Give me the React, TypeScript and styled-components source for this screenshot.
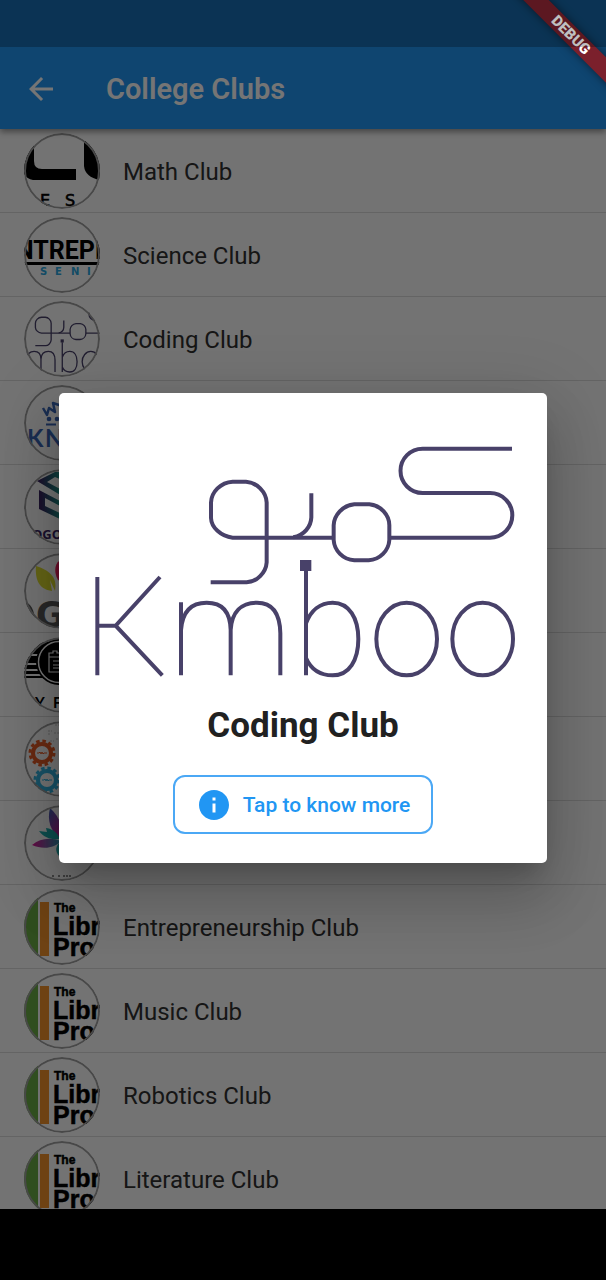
import React from 'react';
import styled, { createGlobalStyle } from 'styled-components';

const GlobalStyle = createGlobalStyle`
  *, *::before, *::after { box-sizing: border-box; }
  body {
    margin: 0;
    background: #000;
    font-family: Roboto, 'Liberation Sans', sans-serif;
  }
  button { font: inherit; border: 0; background: none; padding: 0; cursor: pointer; }
  h1, h2, ul { margin: 0; padding: 0; }
`;

const STATUS_HEIGHT = '47px';
const NAV_HEIGHT = '71px';

const Screen = styled.div`
  position: relative;
  display: flex;
  flex-direction: column;
  height: 100vh;
  overflow: hidden;
  background: #fafafa;
`;

const AppBar = styled.header`
  position: relative;
  z-index: 1;
  flex: none;
  display: flex;
  align-items: center;
  gap: 47px;
  padding: 49px 23px 0;
  height: 129px;
  background: #2196f3;
  color: #fff;
  box-shadow: 0 3px 6px rgba(0, 0, 0, 0.4);
`;

const BackButton = styled.button`
  display: flex;
  color: inherit;
`;

const AppTitle = styled.h1`
  font-size: 29px;
  line-height: 36px;
  font-weight: 600;
`;

const ClubList = styled.ul`
  flex: 1 1 0;
  min-height: 0;
  overflow: hidden;
  list-style: none;
`;

const ClubItem = styled.li`
  height: 84px;
  border-bottom: 1px solid #dadada;
`;

const ClubButton = styled.button`
  display: flex;
  align-items: center;
  gap: 23px;
  width: 100%;
  padding: 4px 24px;
  text-align: left;
  color: #303030;
`;

const AvatarRing = styled.span`
  flex: none;
  width: 76px;
  height: 76px;
  border-radius: 50%;
  overflow: hidden;
  background: #fafafa;
  position: relative;

  &::after {
    content: '';
    position: absolute;
    inset: 0;
    border: 2px solid #9e9e9e;
    border-radius: 50%;
  }

  svg { display: block; width: 100%; height: 100%; }
`;

const ClubName = styled.span`
  padding-top: 2px;
  font-size: 24px;
  line-height: 28px;
`;

const NavigationBar = styled.footer`
  flex: none;
  height: ${NAV_HEIGHT};
  background: #000;
`;

const Scrim = styled.div`
  position: absolute;
  inset: 0;
  z-index: 2;
  display: flex;
  align-items: center;
  justify-content: center;
  padding: ${STATUS_HEIGHT} 59px ${NAV_HEIGHT};
  background: rgba(0, 0, 0, 0.54);
`;

const Dialog = styled.section`
  flex: 1;
  display: flex;
  flex-direction: column;
  align-items: center;
  padding-bottom: 29px;
  border-radius: 5px;
  background: #fff;
  box-shadow:
    0 16px 22px -10px rgba(0, 0, 0, 0.2),
    0 36px 56px 4px rgba(0, 0, 0, 0.14),
    0 14px 68px 12px rgba(0, 0, 0, 0.12);
`;

const DialogLogo = styled.div`
  width: 100%;

  svg { display: block; width: 100%; }
`;

const DialogTitle = styled.h2`
  margin-bottom: 26px;
  font-size: 35px;
  line-height: 46px;
  font-weight: 700;
  color: #212121;
`;

const MoreButton = styled.button`
  display: flex;
  align-items: center;
  gap: 11px;
  height: 59px;
  padding: 0 21px;
  border: 2px solid #4ba8f5;
  border-radius: 12px;
  color: #2196f3;
  font-size: 21px;
  line-height: 24px;
  font-weight: 500;
`;

const RibbonCorner = styled.div`
  position: absolute;
  top: 0;
  right: 0;
  z-index: 3;
  width: 120px;
  height: 120px;
  overflow: hidden;
  pointer-events: none;
`;

const Ribbon = styled.div`
  position: absolute;
  top: 26px;
  right: -65px;
  width: 200px;
  text-align: center;
  font-size: 15px;
  line-height: 18px;
  font-weight: 900;
  color: #fff;
  background: #7b202c;
  box-shadow: 0 0 9px rgba(0, 0, 0, 0.5);
  transform: rotate(45deg);
`;

const StatusShade = styled.div`
  position: absolute;
  inset: 0 0 auto;
  z-index: 4;
  height: ${STATUS_HEIGHT};
  background: rgba(0, 0, 0, 0.25);
  pointer-events: none;
`;

function KmbooMark({ viewBox, weight = 12 }: { viewBox: string; weight?: number }) {
  return (
    <svg viewBox={viewBox} fill="none" stroke="#484169" strokeWidth={weight} aria-hidden="true">
      <path d="M1358 56H1090A66.5 66.5 0 0 0 1090 189H1292A67 67 0 0 1 1292 323H990" />
      <path d="M823 323H520C484 319 456 292 455 264V218C456 186 484 157 520 155H560C592 157 621 186 622 218V397C620 428 592 456 562 457H454" />
      <path d="M756 190V262C755 290 734 316 702 322" />
      <path d="M885 223H930C965 226 990 256 990 286V330C988 362 962 389 928 391H885C851 389 825 362 823 330V286C824 256 850 226 885 223Z" />
      <rect x="722" y="390" width="34" height="33" fill="#484169" stroke="none" />
      <path d="M740 420V736M740 580C754 542 782 518 820 518C870 518 897 565 897 627C897 690 870 736 820 736C782 736 754 716 740 684" />
      <path d="M114 441V736M114 587H168M302 441L169 587L309 736" />
      <path d="M365 517V736M365 600C369 545 396 518 442 518C488 518 513 545 514 600V736M514 600C517 545 547 518 593 518C640 518 662 550 663 610V736" />
      <ellipse cx="1042" cy="627" rx="91" ry="109" />
      <ellipse cx="1270" cy="627" rx="91" ry="109" />
    </svg>
  );
}

function MathMark() {
  return (
    <svg viewBox="0 0 76 76" aria-hidden="true">
      <path d="M0 8H10V28Q10 36 18 36H52V47H9Q3 46 0 41Z" />
      <path d="M60 8H76V47Q61 44 60 33Z" />
      <g fontFamily="DejaVu Sans" fontSize="16" stroke="#000" strokeWidth="0.6">
        <text x="16" y="73">E</text>
        <text x="41" y="73">S</text>
      </g>
    </svg>
  );
}

function ScienceMark() {
  return (
    <svg viewBox="0 0 76 76" aria-hidden="true">
      <text x="-8" y="42" fontFamily="Roboto" fontWeight="700" fontSize="25">
        NTREPR
      </text>
      <rect y="45" width="76" height="3" />
      <g fontFamily="DejaVu Sans" fontWeight="700" fontSize="10" fill="#28a3dc">
        <text x="16" y="58">S</text>
        <text x="31" y="58">E</text>
        <text x="47" y="58">N</text>
        <text x="63" y="58">I</text>
      </g>
    </svg>
  );
}

function KnMark() {
  return (
    <svg viewBox="0 0 76 76" aria-hidden="true">
      <g fill="none" stroke="#3a64b4" strokeWidth="2.5" strokeLinejoin="round">
        <path d="M19 23L23 30L25 23L31 27L29 18L38 21" />
        <path d="M22 39.5H32" strokeWidth="2" />
      </g>
      <g fill="#3a64b4">
        <circle cx="25" cy="34" r="2.3" />
        <circle cx="33" cy="34" r="2.3" />
        <g fontFamily="Lato" fontWeight="700" fontSize="24">
          <text x="3" y="62">K</text>
          <text x="21" y="62">N</text>
        </g>
      </g>
    </svg>
  );
}

function LogoMark() {
  return (
    <svg viewBox="0 0 76 76" aria-hidden="true">
      <defs>
        <linearGradient id="fold" x1="0" x2="1">
          <stop offset="0.1" stopColor="#3a2462" />
          <stop offset="1" stopColor="#1fa08c" />
        </linearGradient>
      </defs>
      <path d="M13 12L31 3H38V11L31 8L23 13L38 21V27Z" fill="url(#fold)" />
      <path d="M15 21L38 33V38L21 29V37L38 45V51L15 40Z" fill="url(#fold)" />
      <text x="8" y="70" fontFamily="Open Sans" fontWeight="700" fontSize="13" fill="#3a2462">OGO</text>
    </svg>
  );
}

function LeafLetterMark() {
  return (
    <svg viewBox="0 0 76 76" aria-hidden="true">
      <path d="M12 13C24 17 34 23 31 38L26 27L28 38C15 36 11 27 12 13Z" fill="#dcdc30" />
      <path d="M38 6C31 9 29 18 34 27L38 29Z" fill="#f0205c" />
      <path d="M0 48C7 51 10 56 11 67C4 62 1 57 0 48Z" fill="#585858" />
      <text x="12" y="74" fontFamily="DejaVu Sans" fontWeight="700" fontSize="35" fill="#585858">G</text>
    </svg>
  );
}

function CameraMark() {
  return (
    <svg viewBox="0 0 76 76" aria-hidden="true">
      <path d="M0 5H38V17H0ZM0 19H38V26H0ZM0 28H38V32H0ZM0 34H38V37H0ZM0 39H38V41H0Z" />
      <circle cx="35" cy="25" r="23" />
      <circle cx="35" cy="25" r="20.5" fill="none" stroke="#fff" strokeWidth="1.5" />
      <path d="M25 16H29V14H33V16H46V35H25ZM25 20H46M29 24H46M29 28H46M29 31H46" fill="none" stroke="#fff" strokeWidth="1.2" />
      <g fontFamily="Lato" fontSize="15" fontWeight="700">
        <text x="11" y="71">Y</text>
        <text x="29" y="71">F</text>
      </g>
    </svg>
  );
}

function Gear({ cx, cy, color }: { cx: number; cy: number; color: string }) {
  return (
    <g transform={`translate(${cx} ${cy})`}>
      <circle r="9" fill="none" stroke={color} strokeWidth="4" />
      <circle r="12" fill="none" stroke={color} strokeWidth="3" strokeDasharray="3.5 2.783" />
      <path d="M-5 0H-3L-2 -1L-1 1L0 -1L1 1L2 0H5" fill="none" stroke={color} strokeWidth="1" />
    </g>
  );
}

function GearsMark() {
  return (
    <svg viewBox="0 0 76 76" aria-hidden="true">
      <path d="M24 10H28M30 12H37M24 13H27M31 4H37M26 20H30M32 18H37" stroke="#c4c4c4" strokeWidth="1" strokeDasharray="2 1" />
      <Gear cx={18} cy={32} color="#e85c26" />
      <Gear cx={23} cy={59} color="#35b4e0" />
    </svg>
  );
}

function PetalsMark() {
  return (
    <svg viewBox="0 0 76 76" aria-hidden="true">
      <defs>
        <linearGradient id="petalUp" x1="0" y1="0" x2="0.6" y2="1">
          <stop offset="0" stopColor="#3c64b4" />
          <stop offset="1" stopColor="#c81e96" />
        </linearGradient>
        <linearGradient id="petalSide" x1="0" x2="1">
          <stop offset="0" stopColor="#dc1496" />
          <stop offset="1" stopColor="#28a0b4" />
        </linearGradient>
      </defs>
      <path d="M26 3C36 12 40 24 37 35C26 26 23 15 26 3Z" fill="url(#petalUp)" />
      <path d="M15 26L23 27L22 23C30 24 34 29 36 34C28 35 20 33 15 26Z" fill="#1eaaaa" />
      <path d="M8 40C16 33 27 32 37 36C31 43 19 45 8 40Z" fill="url(#petalSide)" />
      <path d="M37 36C31 41 31 46 35 51L38 50Z" fill="#1eaaaa" />
      <path d="M28 71H31M34 71H36M39 71H48" stroke="#222" strokeWidth="1" strokeDasharray="2 1" />
    </svg>
  );
}

function LibraryMark() {
  return (
    <svg viewBox="0 0 76 76" aria-hidden="true">
      <rect width="14" height="76" fill="#6aaa44" />
      <rect x="16" y="13" width="9" height="54" fill="#f0912a" />
      <g fontFamily="Liberation Sans" fontWeight="700" stroke="#000" strokeWidth="0.5">
        <text x="30" y="23" fontSize="12">The</text>
        <text x="29" y="46" fontSize="25">Libr</text>
        <text x="29" y="67" fontSize="25">Pro</text>
      </g>
    </svg>
  );
}

interface Club {
  id: string;
  name?: string;
  mark: React.ReactNode;
}

const clubs: Club[] = [
  { id: 'math', name: 'Math Club', mark: <MathMark /> },
  { id: 'science', name: 'Science Club', mark: <ScienceMark /> },
  { id: 'coding', name: 'Coding Club', mark: <KmbooMark viewBox="334 -17 806 806" weight={14} /> },
  { id: 'kn', mark: <KnMark /> },
  { id: 'fold', mark: <LogoMark /> },
  { id: 'leaf', mark: <LeafLetterMark /> },
  { id: 'camera', mark: <CameraMark /> },
  { id: 'gears', mark: <GearsMark /> },
  { id: 'petals', mark: <PetalsMark /> },
  { id: 'entrepreneurship', name: 'Entrepreneurship Club', mark: <LibraryMark /> },
  { id: 'music', name: 'Music Club', mark: <LibraryMark /> },
  { id: 'robotics', name: 'Robotics Club', mark: <LibraryMark /> },
  { id: 'literature', name: 'Literature Club', mark: <LibraryMark /> },
];

export default function App() {
  return (
    <>
      <GlobalStyle />
      <Screen>
        <AppBar>
          <BackButton type="button" aria-label="Back">
            <svg width="36" height="36" viewBox="0 0 24 24" fill="currentColor" aria-hidden="true">
              <path d="M20 11H7.83l5.59-5.59L12 4l-8 8 8 8 1.41-1.41L7.83 13H20v-2z" />
            </svg>
          </BackButton>
          <AppTitle>College Clubs</AppTitle>
        </AppBar>

        <ClubList>
          {clubs.map((club) => (
            <ClubItem key={club.id}>
              <ClubButton type="button">
                <AvatarRing>{club.mark}</AvatarRing>
                {club.name && <ClubName>{club.name}</ClubName>}
              </ClubButton>
            </ClubItem>
          ))}
        </ClubList>

        <NavigationBar />

        <Scrim>
          <Dialog role="dialog" aria-modal="true" aria-labelledby="club-title">
            <DialogLogo>
              <KmbooMark viewBox="-1 -111 1464 930" />
            </DialogLogo>
            <DialogTitle id="club-title">Coding Club</DialogTitle>
            <MoreButton type="button">
              <svg width="36" height="36" viewBox="0 0 24 24" fill="currentColor" aria-hidden="true">
                <path d="M12 2C6.48 2 2 6.48 2 12s4.48 10 10 10 10-4.48 10-10S17.52 2 12 2zm1 15h-2v-6h2v6zm0-8h-2V7h2v2z" />
              </svg>
              Tap to know more
            </MoreButton>
          </Dialog>
        </Scrim>

        <RibbonCorner>
          <Ribbon>DEBUG</Ribbon>
        </RibbonCorner>
        <StatusShade />
      </Screen>
    </>
  );
}
